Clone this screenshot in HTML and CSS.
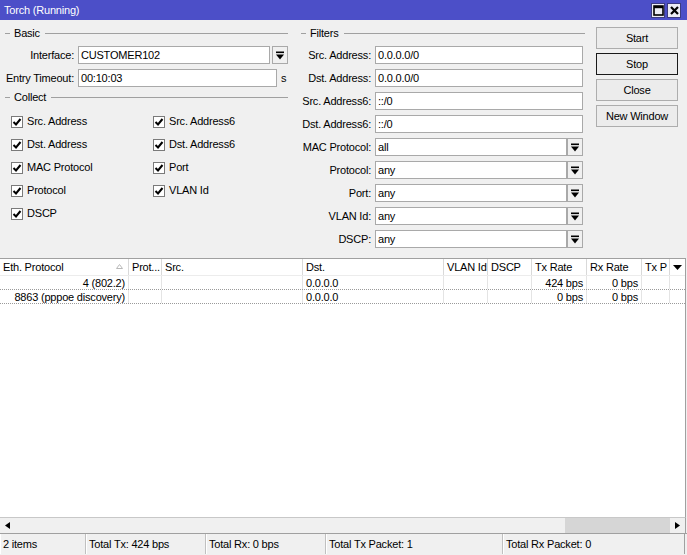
FILE: index.html
```html
<!DOCTYPE html>
<html>
<head>
<meta charset="utf-8">
<link rel="stylesheet" href="styles.css">
</head>
<body>
<div class="window">
  <div class="titlebar">
    <span class="title">Torch (Running)</span>
    <div class="tb-btns">
      <span class="tb-btn"><svg width="11" height="11" viewBox="0 0 11 11"><rect x="1" y="1" width="9" height="9" fill="none" stroke="#000" stroke-width="1.6"/><rect x="1" y="1" width="9" height="2.2" fill="#000"/></svg></span>
      <span class="tb-btn"><svg width="11" height="11" viewBox="0 0 11 11"><path d="M2 2L9 9M9 2L2 9" stroke="#000" stroke-width="2.2"/></svg></span>
    </div>
  </div>

  <div class="top">
    <div class="basic">
      <div class="legend">Basic</div>
      <div class="frow first">
        <span class="lbl">Interface:</span>
        <span class="input w-if">CUSTOMER102</span>
        <span class="dd"><svg width="8" height="9" viewBox="0 0 8 9"><rect x="0" y="0.5" width="8" height="1.6" fill="#000"/><path d="M0 3.5H8L4 8.5Z" fill="#000"/></svg></span>
      </div>
      <div class="frow">
        <span class="lbl">Entry Timeout:</span>
        <span class="input w-to">00:10:03</span>
        <span class="unit">s</span>
      </div>
      <div class="legend collect">Collect</div>
      <div class="checks">
        <label class="chk"><span class="box"><svg width="10" height="10" viewBox="0 0 10 10"><path d="M1.5 5L4 7.5L8.5 2" fill="none" stroke="#000" stroke-width="2"/></svg></span>Src. Address</label>
        <label class="chk"><span class="box"><svg width="10" height="10" viewBox="0 0 10 10"><path d="M1.5 5L4 7.5L8.5 2" fill="none" stroke="#000" stroke-width="2"/></svg></span>Src. Address6</label>
        <label class="chk"><span class="box"><svg width="10" height="10" viewBox="0 0 10 10"><path d="M1.5 5L4 7.5L8.5 2" fill="none" stroke="#000" stroke-width="2"/></svg></span>Dst. Address</label>
        <label class="chk"><span class="box"><svg width="10" height="10" viewBox="0 0 10 10"><path d="M1.5 5L4 7.5L8.5 2" fill="none" stroke="#000" stroke-width="2"/></svg></span>Dst. Address6</label>
        <label class="chk"><span class="box"><svg width="10" height="10" viewBox="0 0 10 10"><path d="M1.5 5L4 7.5L8.5 2" fill="none" stroke="#000" stroke-width="2"/></svg></span>MAC Protocol</label>
        <label class="chk"><span class="box"><svg width="10" height="10" viewBox="0 0 10 10"><path d="M1.5 5L4 7.5L8.5 2" fill="none" stroke="#000" stroke-width="2"/></svg></span>Port</label>
        <label class="chk"><span class="box"><svg width="10" height="10" viewBox="0 0 10 10"><path d="M1.5 5L4 7.5L8.5 2" fill="none" stroke="#000" stroke-width="2"/></svg></span>Protocol</label>
        <label class="chk"><span class="box"><svg width="10" height="10" viewBox="0 0 10 10"><path d="M1.5 5L4 7.5L8.5 2" fill="none" stroke="#000" stroke-width="2"/></svg></span>VLAN Id</label>
        <label class="chk"><span class="box"><svg width="10" height="10" viewBox="0 0 10 10"><path d="M1.5 5L4 7.5L8.5 2" fill="none" stroke="#000" stroke-width="2"/></svg></span>DSCP</label>
      </div>
    </div>

    <div class="filters">
      <div class="legend">Filters</div>
      <div class="frow first"><span class="lbl">Src. Address:</span><span class="input w-f">0.0.0.0/0</span></div>
      <div class="frow"><span class="lbl">Dst. Address:</span><span class="input w-f">0.0.0.0/0</span></div>
      <div class="frow"><span class="lbl">Src. Address6:</span><span class="input w-f">::/0</span></div>
      <div class="frow"><span class="lbl">Dst. Address6:</span><span class="input w-f">::/0</span></div>
      <div class="frow"><span class="lbl">MAC Protocol:</span><span class="input w-fd">all</span><span class="dd"><svg width="8" height="9" viewBox="0 0 8 9"><rect x="0" y="0.5" width="8" height="1.6" fill="#000"/><path d="M0 3.5H8L4 8.5Z" fill="#000"/></svg></span></div>
      <div class="frow"><span class="lbl">Protocol:</span><span class="input w-fd">any</span><span class="dd"><svg width="8" height="9" viewBox="0 0 8 9"><rect x="0" y="0.5" width="8" height="1.6" fill="#000"/><path d="M0 3.5H8L4 8.5Z" fill="#000"/></svg></span></div>
      <div class="frow"><span class="lbl">Port:</span><span class="input w-fd">any</span><span class="dd"><svg width="8" height="9" viewBox="0 0 8 9"><rect x="0" y="0.5" width="8" height="1.6" fill="#000"/><path d="M0 3.5H8L4 8.5Z" fill="#000"/></svg></span></div>
      <div class="frow"><span class="lbl">VLAN Id:</span><span class="input w-fd">any</span><span class="dd"><svg width="8" height="9" viewBox="0 0 8 9"><rect x="0" y="0.5" width="8" height="1.6" fill="#000"/><path d="M0 3.5H8L4 8.5Z" fill="#000"/></svg></span></div>
      <div class="frow"><span class="lbl">DSCP:</span><span class="input w-fd">any</span><span class="dd"><svg width="8" height="9" viewBox="0 0 8 9"><rect x="0" y="0.5" width="8" height="1.6" fill="#000"/><path d="M0 3.5H8L4 8.5Z" fill="#000"/></svg></span></div>
    </div>

    <div class="buttons">
      <span class="btn">Start</span>
      <span class="btn default">Stop</span>
      <span class="btn">Close</span>
      <span class="btn">New Window</span>
    </div>
  </div>

  <div class="table">
    <div class="grid head">
      <span class="c sortcol">Eth. Protocol<svg class="sort" width="7" height="5" viewBox="0 0 7 5"><path d="M0.5 4.5L3.5 0.5L6.5 4.5Z" fill="none" stroke="#b8b8b8" stroke-width="1"/></svg></span>
      <span class="c">Prot...</span>
      <span class="c">Src.</span>
      <span class="c">Dst.</span>
      <span class="c">VLAN Id</span>
      <span class="c">DSCP</span>
      <span class="c">Tx Rate</span>
      <span class="c">Rx Rate</span>
      <span class="c clip">Tx P</span>
      <span class="c menu"><svg width="9" height="5" viewBox="0 0 9 5"><path d="M0 0H9L4.5 5Z" fill="#000"/></svg></span>
    </div>
    <div class="grid row">
      <span class="c r">4 (802.2)</span>
      <span class="c"></span>
      <span class="c"></span>
      <span class="c">0.0.0.0</span>
      <span class="c"></span>
      <span class="c"></span>
      <span class="c r">424 bps</span>
      <span class="c r">0 bps</span>
      <span class="c"></span>
      <span class="c last"></span>
    </div>
    <div class="grid row">
      <span class="c r">8863 (pppoe discovery)</span>
      <span class="c"></span>
      <span class="c"></span>
      <span class="c">0.0.0.0</span>
      <span class="c"></span>
      <span class="c"></span>
      <span class="c r">0 bps</span>
      <span class="c r">0 bps</span>
      <span class="c"></span>
      <span class="c last"></span>
    </div>
  </div>

  <div class="hscroll">
    <span class="arrow"><svg width="5" height="7" viewBox="0 0 5 7"><path d="M5 0V7L0 3.5Z" fill="#000"/></svg></span>
    <span class="track"><span class="thumb"></span></span>
    <span class="arrow"><svg width="5" height="7" viewBox="0 0 5 7"><path d="M0 0V7L5 3.5Z" fill="#000"/></svg></span>
  </div>

  <div class="status">
    <span class="cell s1">2 items</span>
    <span class="cell s2">Total Tx: 424 bps</span>
    <span class="cell s3">Total Rx: 0 bps</span>
    <span class="cell s4">Total Tx Packet: 1</span>
    <span class="cell s5">Total Rx Packet: 0</span>
  </div>
</div>
</body>
</html>
```

FILE: styles.css
```css
* { box-sizing: border-box; }
html, body { margin: 0; padding: 0; }
body {
  width: 687px;
  height: 555px;
  overflow: hidden;
  font-family: "Liberation Sans", Arial, sans-serif;
  font-size: 11px;
  letter-spacing: -0.2px;
  color: #000;
  background: #f0f0f0;
}
.window {
  width: 687px;
  height: 555px;
  display: flex;
  flex-direction: column;
  background: #f0f0f0;
}

/* title bar */
.titlebar {
  height: 20px;
  flex: none;
  background: #4c4fc8;
  color: #fff;
  display: flex;
  align-items: center;
  justify-content: space-between;
  padding: 0 6px 0 4px;
  font-size: 11px;
}
.tb-btns { display: flex; gap: 2px; align-items: center; }
.tb-btn {
  width: 14px;
  height: 15px;
  background: #ececf4;
  border: 1px solid #3c3c80;
  display: flex;
  align-items: center;
  justify-content: center;
}

/* top area */
.top {
  height: 238px;
  flex: none;
  display: flex;
  padding: 5px 0 0 4px;
}
.basic { width: 284px; display: flex; flex-direction: column; }
.filters { width: 285px; margin-left: 12px; display: flex; flex-direction: column; }
.buttons {
  width: 82px;
  margin-left: 11px;
  padding-top: 2px;
  display: flex;
  flex-direction: column;
  gap: 4px;
}

.legend {
  height: 16px;
  display: flex;
  align-items: center;
}
.legend::before {
  content: "";
  width: 5px;
  margin-left: 1px;
  margin-right: 4px;
  border-top: 1px solid #a0a0a0;
}
.legend::after {
  content: "";
  flex: 1;
  margin-left: 5px;
  border-top: 1px solid #a0a0a0;
}
.legend.collect { margin-top: 2px; }

.frow {
  height: 18px;
  margin-top: 5px;
  display: flex;
  align-items: center;
}
.lbl { text-align: right; margin-right: 4px; white-space: nowrap; }
.basic .lbl { width: 70px; }
.filters .lbl { width: 71px; }
.input {
  height: 18px;
  background: #fff;
  border: 1px solid #a9a9a9;
  padding: 0 2px;
  display: flex;
  align-items: center;
  white-space: nowrap;
  overflow: hidden;
}
.w-if { width: 192px; }
.w-to { width: 199px; }
.w-f { width: 208px; }
.w-fd { width: 192px; }
.dd {
  width: 16px;
  height: 18px;
  margin-left: 2px;
  border: 1px solid #a9a9a9;
  background: #f0f0f0;
  display: flex;
  align-items: center;
  justify-content: center;
}
.filters .dd { margin-left: 0; }
.unit { margin-left: 4px; }

.checks {
  margin-top: 7px;
  padding-left: 7px;
  display: grid;
  grid-template-columns: 142px 130px;
  grid-auto-rows: 18px;
  row-gap: 5px;
}
.chk { display: flex; align-items: center; }
.box {
  width: 12px;
  height: 12px;
  margin-right: 4px;
  margin-top: 2px;
  background: #fff;
  border: 1px solid #7a7a7a;
  display: flex;
  align-items: center;
  justify-content: center;
}

.btn {
  height: 22px;
  background: #ececec;
  border: 1px solid #adadad;
  display: flex;
  align-items: center;
  justify-content: center;
}
.btn.default { border-color: #1a1a1a; }

/* table */
.table {
  flex: 1;
  width: 686px;
  background: #fff;
  border-top: 1px solid #a0a0a0;
  border-right: 1px solid #a0a0a0;
  overflow: hidden;
}
.grid {
  display: grid;
  grid-template-columns: 129px 33px 141px 141px 44px 44px 55px 55px 28px 15px;
}
.head { height: 17px; border-bottom: 1px solid #ececec; }
.head .c {
  border-right: 1px solid #d9d9d9;
  padding: 0 3px;
  display: flex;
  align-items: center;
  white-space: nowrap;
  overflow: hidden;
}
.sortcol { position: relative; }
.sort { position: absolute; right: 5px; top: 5px; }
.head .clip { padding-right: 0; }
.head .menu { border-right: none; justify-content: center; padding: 0; }
.row { height: 14px; border-bottom: 1px dotted #9a9a9a; }
.row .c {
  border-right: 1px solid #e4e4e4;
  padding: 0 3px;
  display: flex;
  align-items: center;
  white-space: nowrap;
  overflow: hidden;
}
.row .c.r { justify-content: flex-end; }
.row .c.last { border-right: none; }

/* horizontal scrollbar */
.hscroll {
  height: 16px;
  flex: none;
  width: 686px;
  display: flex;
  background: #f0f0f0;
  border-top: 1px solid #c8c8c8;
  border-right: 1px solid #a0a0a0;
}
.arrow {
  width: 15px;
  display: flex;
  align-items: center;
  justify-content: center;
}
.track { flex: 1; display: flex; justify-content: flex-end; }
.thumb { width: 105px; background: #d6d6d6; }

/* status bar */
.status {
  height: 22px;
  flex: none;
  display: flex;
  padding-bottom: 2px;
  border-top: 1px solid #a0a0a0;
}
.cell {
  height: 20px;
  display: flex;
  align-items: center;
  padding-left: 2px;
  border-right: 1px solid #c0c0c0;
  border-left: 1px solid #ffffff;
  white-space: nowrap;
}
.s1 { width: 86px; }
.s2 { width: 120px; }
.s3 { width: 120px; }
.s4 { width: 177px; }
.s5 { width: 182px; border-right: 1px solid #a0a0a0; }
```
